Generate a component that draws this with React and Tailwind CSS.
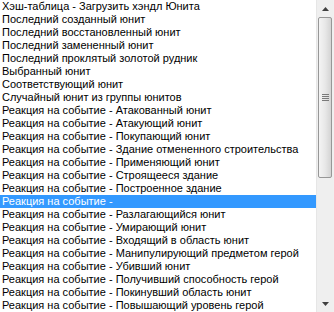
import React from 'react';

const items = [
  'Хэш-таблица - Загрузить хэндл Юнита',
  'Последний созданный юнит',
  'Последний восстановленный юнит',
  'Последний замененный юнит',
  'Последний проклятый золотой рудник',
  'Выбранный юнит',
  'Соответствующий юнит',
  'Случайный юнит из группы юнитов',
  'Реакция на событие - Атакованный юнит',
  'Реакция на событие - Атакующий юнит',
  'Реакция на событие - Покупающий юнит',
  'Реакция на событие - Здание отмененного строительства',
  'Реакция на событие - Применяющий юнит',
  'Реакция на событие - Строящееся здание',
  'Реакция на событие - Построенное здание',
  'Реакция на событие - ',
  'Реакция на событие - Разлагающийся юнит',
  'Реакция на событие - Умирающий юнит',
  'Реакция на событие - Входящий в область юнит',
  'Реакция на событие - Манипулирующий предметом герой',
  'Реакция на событие - Убивший юнит',
  'Реакция на событие - Получивший способность герой',
  'Реакция на событие - Покинувший область юнит',
  'Реакция на событие - Повышающий уровень герой',
];

const App = () => {
  return (
    <div className="flex w-[334px] h-[312px] bg-white overflow-hidden" style={{ fontFamily: '"Liberation Sans", Arial, sans-serif' }}>
      {/* List */}
      <div className="flex-1 flex flex-col">
        {items.map((t, i) => (
          <div
            key={i}
            className={`h-[13px] leading-[13px] text-[11px] pl-[2px] whitespace-pre ${i === 15 ? 'bg-[#3399ff] text-white' : 'text-black'}`}
          >
            {t}
          </div>
        ))}
      </div>

      {/* Scrollbar */}
      <div className="w-[17px] h-full flex flex-col bg-[#efefef] border-l border-[#e6e6e6]">
        <div className="h-[17px] flex items-center justify-center">
          <svg width="7" height="4" viewBox="0 0 7 4"><path d="M3.5 0 L7 4 L0 4 Z" fill="#404040" /></svg>
        </div>
        <div className="mx-[1px] h-[161px] rounded-[2px] border border-[#979797] bg-gradient-to-r from-[#f4f4f4] via-[#e8e8e8] to-[#d4d4d4] flex items-center justify-center">
          <div className="flex flex-col gap-[1px]">
            <div className="w-[7px] h-[1px] bg-[#7a7a7a]" />
            <div className="w-[7px] h-[1px] bg-[#7a7a7a]" />
            <div className="w-[7px] h-[1px] bg-[#7a7a7a]" />
            <div className="w-[7px] h-[1px] bg-[#7a7a7a]" />
          </div>
        </div>
        <div className="flex-1" />
        <div className="h-[17px] flex items-center justify-center">
          <svg width="7" height="4" viewBox="0 0 7 4"><path d="M0 0 L7 0 L3.5 4 Z" fill="#404040" /></svg>
        </div>
      </div>
      <div className="w-[1px] h-full bg-[#f0f0f0]" />
    </div>
  );
};

export default App;
